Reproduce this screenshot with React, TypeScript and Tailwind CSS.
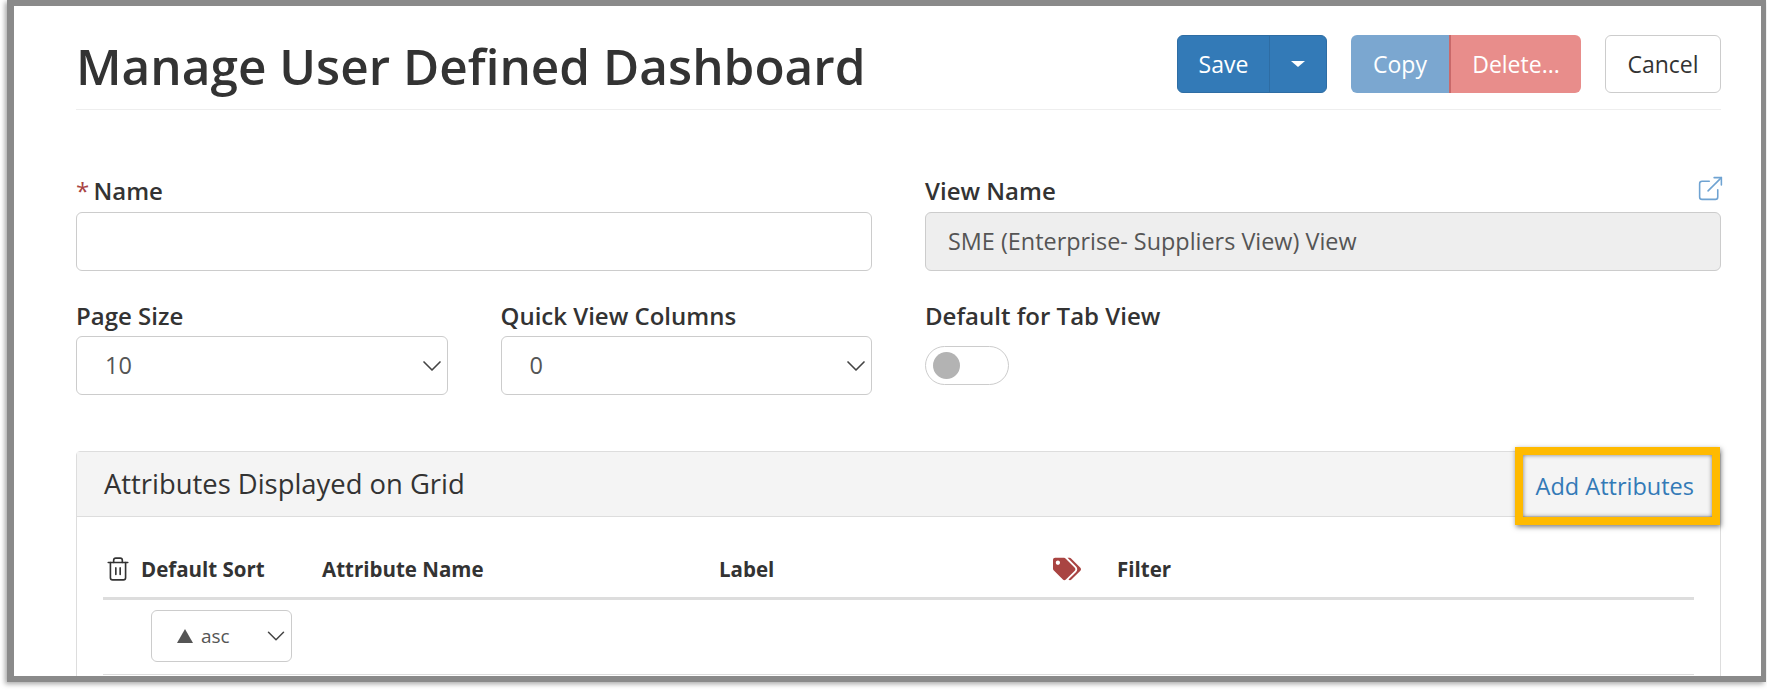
import React from 'react';
import { ExternalLink, Trash2, ChevronDown } from 'lucide-react';
import { FaTags } from 'react-icons/fa';

const FieldLabel: React.FC<{ children: React.ReactNode }> = ({ children }) => (
  <label className="block text-[24px] leading-[30px] font-semibold text-[#333]">{children}</label>
);

const SelectBox: React.FC<{ value: string }> = ({ value }) => (
  <div className="h-[59px] mt-[5px] flex items-center justify-between pl-[28px] bg-white border border-[#ccc] rounded-[6px] text-[23.5px] text-[#555]">
    <span>{value}</span>
    <ChevronDown size={32} strokeWidth={1.25} className="text-[#444] mr-[-1px]" />
  </div>
);

export default function App() {
  return (
    <div className="w-[1767px] h-[690px] bg-white font-['Open_Sans',sans-serif] overflow-hidden">
      {/* Screenshot frame */}
      <div className="ml-[7px] w-[1759px] h-[682px] border-[7px] border-[#8a8a8a] border-t-[6px] border-r-[5px] border-b-[6px] shadow-[-2px_2px_5px_rgba(0,0,0,0.35)] overflow-hidden pl-[62px] pr-[40px] pt-[29px] relative">
        {/* Header */}
        <div className="flex items-start justify-between h-[75px] border-b border-[#eee]">
          <h1 className="text-[49.5px] leading-[62px] font-semibold text-[#333]">Manage User Defined Dashboard</h1>
          <div className="flex items-center">
            <div className="flex h-[58px] w-[150px] rounded-[6px] bg-[#337ab7] border border-[#2e6da4] text-white text-[23px]">
              <span className="w-[92px] flex items-center justify-center border-r border-[#2e6da4]">Save</span>
              <span className="flex-1 flex items-center justify-center">
                <span className="w-0 h-0 border-x-[7px] border-x-transparent border-t-[6px] border-t-white" />
              </span>
            </div>
            <div className="flex h-[58px] w-[230px] ml-[24px] rounded-[6px] overflow-hidden text-white text-[23px]">
              <span className="w-[98px] flex items-center justify-center bg-[#7ba7d0]">Copy</span>
              <span className="flex-1 flex items-center justify-center bg-[#e88d8b] border-l-2 border-[#c8696a]">Delete...</span>
            </div>
            <div className="flex h-[58px] w-[116px] ml-[24px] items-center justify-center rounded-[6px] border border-[#ccc] text-[#333] text-[23px]">
              Cancel
            </div>
          </div>
        </div>

        {/* Form */}
        <div className="grid grid-cols-2 gap-x-[53px] mt-[66px]">
          <div>
            <FieldLabel>
              <span className="text-[#a94442] font-normal mr-[-2px]">*</span> Name
            </FieldLabel>
            <div className="h-[59px] mt-[6px] border border-[#ccc] rounded-[6px] bg-white" />
          </div>
          <div className="relative">
            <FieldLabel>View Name</FieldLabel>
            <ExternalLink size={29} strokeWidth={1.3} className="absolute right-[-4px] top-[-2px] text-[#6fa3d2]" />
            <div className="h-[59px] mt-[6px] flex items-center px-[22px] border border-[#ccc] rounded-[6px] bg-[#eee] text-[23.4px] text-[#555]">
              SME (Enterprise- Suppliers View) View
            </div>
          </div>
        </div>

        <div className="grid grid-cols-2 gap-x-[53px] mt-[30px]">
          <div className="grid grid-cols-2 gap-x-[53px]">
            <div>
              <FieldLabel>Page Size</FieldLabel>
              <SelectBox value="10" />
            </div>
            <div>
              <FieldLabel>Quick View Columns</FieldLabel>
              <SelectBox value="0" />
            </div>
          </div>
          <div>
            <FieldLabel>Default for Tab View</FieldLabel>
            <div className="mt-[15px] w-[84px] h-[39px] rounded-full border border-[#ccc] flex items-center pl-[7px]">
              <span className="w-[27px] h-[27px] rounded-full bg-[#b3b3b3]" />
            </div>
          </div>
        </div>

        {/* Attributes panel */}
        <div className="mt-[56px] border border-[#ddd] rounded-t-[4px] h-[300px] px-[26px] relative">
          <div className="-mx-[26px] h-[65px] flex items-center justify-between pl-[27px] pr-[26px] bg-[#f4f4f4] border-b border-[#ddd]">
            <span className="text-[27.4px] text-[#333] font-medium">Attributes Displayed on Grid</span>
            <a className="text-[23.5px] text-[#337ab7] pt-[5px]">Add Attributes</a>
          </div>

          <div className="flex items-center h-[83px] border-b-[3px] border-[#ddd] text-[20.5px] font-bold text-[#333] pt-[28px] pb-[4px]">
            <span className="w-[38px] pl-[2px]">
              <Trash2 size={26} strokeWidth={1.5} />
            </span>
            <span className="w-[181px]">Default Sort</span>
            <span className="w-[397px]">Attribute Name</span>
            <span className="w-[334px]">Label</span>
            <span className="w-[64px] text-[#a94442]">
              <FaTags size={28} />
            </span>
            <span>Filter</span>
          </div>

          <div className="border-b border-[#ddd] h-[75px] pt-[10px] pl-[48px]">
            <div className="w-[141px] h-[52px] flex items-center justify-between pl-[25px] border border-[#ccc] rounded-[6px] text-[19px] text-[#555]">
              <span className="flex items-center gap-[8px]">
                <span className="w-0 h-0 border-x-[8px] border-x-transparent border-b-[14px] border-b-[#555]" />
                asc
              </span>
              <ChevronDown size={30} strokeWidth={1.2} className="text-[#444]" />
            </div>
          </div>

          {/* Callout on the Add Attributes link */}
          <div className="absolute right-0 top-[-5px] w-[205px] h-[78px] border-[8px] border-[#ffba00] shadow-[1px_2px_5px_rgba(0,0,0,0.5),inset_0_0_4px_rgba(0,0,0,0.5)]" />
        </div>
      </div>
    </div>
  );
}
